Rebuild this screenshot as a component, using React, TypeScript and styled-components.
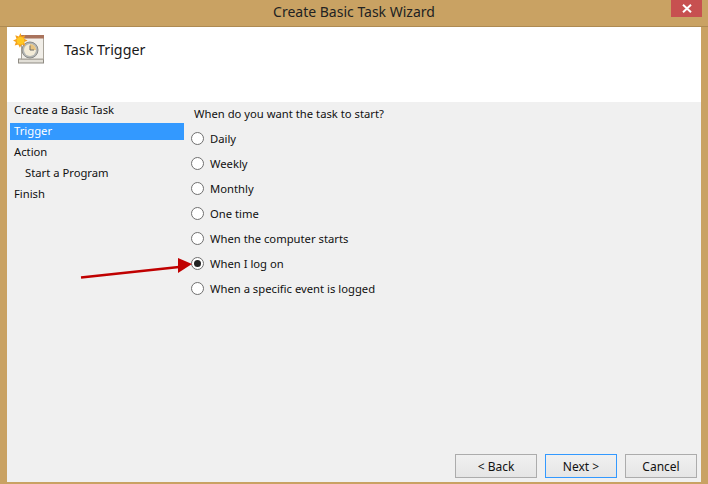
import React from "react";
import styled, { createGlobalStyle } from "styled-components";

const Global = createGlobalStyle`
  html, body { margin: 0; padding: 0; background: #c9a263; }
  #root { width: 708px; height: 484px; overflow: hidden; }
`;

const Frame = styled.div`
  position: relative;
  width: 708px;
  height: 484px;
  display: flex;
  flex-direction: column;
  background: #c9a263;
  font-family: "Noto Sans", "Open Sans", sans-serif;
  font-size: 11.25px;
  color: #111;
  box-sizing: border-box;
`;

const TitleBar = styled.div`
  height: 26px;
  flex: none;
  display: grid;
  grid-template-columns: 1fr 31px 6px;
  align-items: start;
  border-bottom: 1px solid #ae8a52;
`;

const Title = styled.div`
  font-size: 14px;
  line-height: 24px;
  text-align: center;
  color: #222;
  padding-left: 37px;
`;

const CloseButton = styled.div`
  width: 31px;
  height: 17px;
  background: #c75050;
  display: flex;
  align-items: center;
  justify-content: center;
`;

const Client = styled.div`
  flex: none;
  width: 694px;
  height: 455px;
  margin-left: 7px;
  display: flex;
  flex-direction: column;
  background: #f0f0f0;
`;

const Header = styled.div`
  height: 75px;
  flex: none;
  background: #fff;
  display: flex;
  align-items: flex-start;
  padding: 5px 0 0 6px;
  box-sizing: border-box;
`;

const HeaderTitle = styled.div`
  font-size: 14.3px;
  line-height: 20px;
  margin: 8px 0 0 19px;
  color: #1a1a1a;
`;

const Body = styled.div`
  flex: 1;
  display: flex;
  min-height: 0;
`;

const Nav = styled.nav`
  width: 174px;
  flex: none;
  padding: 0 0 0 3px;
  display: flex;
  flex-direction: column;
  gap: 4px;
`;

const NavItem = styled.div<{ $active?: boolean; $indent?: boolean }>`
  height: 17px;
  line-height: 16px;
  padding-left: ${(p) => (p.$indent ? "15px" : "4px")};
  background: ${(p) => (p.$active ? "#3399ff" : "transparent")};
  color: ${(p) => (p.$active ? "#fff" : "#111")};
`;

const Main = styled.main`
  flex: 1;
  display: flex;
  flex-direction: column;
  padding: 3px 4px 4px 7px;
`;

const Question = styled.div`
  line-height: 17px;
  height: 17px;
  margin-bottom: 8px;
  padding-left: 3px;
`;

const Options = styled.div`
  display: flex;
  flex-direction: column;
  gap: 8px;
  flex: 1;
`;

const Option = styled.label`
  display: flex;
  align-items: center;
  height: 17px;
  gap: 6px;
  line-height: 17px;
`;

const Radio = styled.span<{ $on?: boolean }>`
  width: 13px;
  height: 13px;
  box-sizing: border-box;
  border-radius: 50%;
  border: 1px solid #707070;
  background: #fff;
  display: flex;
  align-items: center;
  justify-content: center;
  &::after {
    content: "";
    width: 7px;
    height: 7px;
    border-radius: 50%;
    background: ${(p) => (p.$on ? "#222" : "transparent")};
  }
`;

const Footer = styled.div`
  display: flex;
  justify-content: flex-end;
  gap: 8px;
`;

const Button = styled.button<{ $w: number; $primary?: boolean }>`
  width: ${(p) => p.$w}px;
  height: 24px;
  box-sizing: border-box;
  padding: 0;
  font: inherit;
  font-size: 12px;
  color: #111;
  border: 1px solid ${(p) => (p.$primary ? "#3399ff" : "#acacac")};
  background: linear-gradient(#f0f0f0, #e5e5e5);
`;

const ArrowOverlay = styled.svg`
  position: absolute;
  left: 78px;
  top: 255px;
`;

const TaskIcon = () => (
  <svg width="32" height="32" viewBox="0 0 32 32">
    <rect x="5.5" y="27" width="25" height="4" fill="#e2dfd7" stroke="#8f8b83" />
    <rect x="8.5" y="4" width="22" height="23" fill="#f1eee8" stroke="#a9a49a" />
    <rect x="8" y="3" width="23" height="3.5" fill="#a9735c" />
    <circle cx="17" cy="18" r="8" fill="#b4b6b4" stroke="#8c8c88" />
    <circle cx="17" cy="18" r="6" fill="#f4ecd8" />
    <path d="M17 18V12A6 6 0 0 1 23 18Z" fill="#e8c37e" />
    <path d="M17 13.5V18H21" fill="none" stroke="#6d6d6d" strokeWidth="1" />
    <path d="M7.5 1l1.2 3.6 3.5-1.4-1.2 3.6 3.6 1.7-3.4 1.6 1 3.6-3.5-1.3-1.8 3.4-1.6-3.4-3.6 1.2 1.2-3.5L0 8.6l3.5-1.7-1.2-3.6 3.6 1.3z" fill="#f5a11c" />
    <circle cx="7.5" cy="8.7" r="3.8" fill="#ffc821" />
  </svg>
);

export default function App() {
  const options = [
    "Daily",
    "Weekly",
    "Monthly",
    "One time",
    "When the computer starts",
    "When I log on",
    "When a specific event is logged",
  ];
  return (
    <Frame>
      <Global />
      <TitleBar>
        <Title>Create Basic Task Wizard</Title>
        <CloseButton>
          <svg width="10" height="9" viewBox="0 0 10 9">
            <path d="M1 0.8L9 8.2M9 0.8L1 8.2" stroke="#fff" strokeWidth="2" />
          </svg>
        </CloseButton>
      </TitleBar>
      <Client>
        <Header>
          <TaskIcon />
          <HeaderTitle>Task Trigger</HeaderTitle>
        </Header>
        <Body>
          <Nav>
            <NavItem>Create a Basic Task</NavItem>
            <NavItem $active>Trigger</NavItem>
            <NavItem>Action</NavItem>
            <NavItem $indent>Start a Program</NavItem>
            <NavItem>Finish</NavItem>
          </Nav>
          <Main>
            <Question>When do you want the task to start?</Question>
            <Options>
              {options.map((o) => (
                <Option key={o}>
                  <Radio $on={o === "When I log on"} />
                  {o}
                </Option>
              ))}
            </Options>
            <Footer>
              <Button $w={82}>&lt; Back</Button>
              <Button $w={72} $primary>Next &gt;</Button>
              <Button $w={72}>Cancel</Button>
            </Footer>
          </Main>
        </Body>
      </Client>
      <ArrowOverlay width="114" height="26" viewBox="0 0 114 26">
        <path d="M3 22.5L101 12" stroke="#c00000" strokeWidth="2.6" fill="none" />
        <path d="M100 3L114 9L100 18Z" fill="#c00000" />
      </ArrowOverlay>
    </Frame>
  );
}
